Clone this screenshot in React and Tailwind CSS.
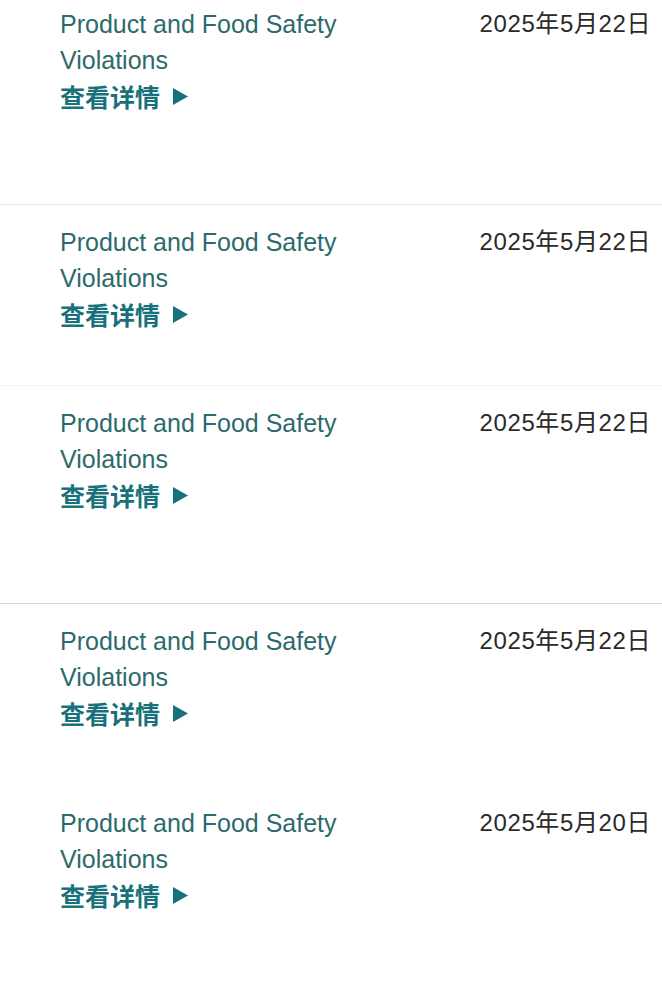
const rows = [
  { date: "2025年5月22日", h: "h-[205px]", pt: "pt-[6px]" },
  { date: "2025年5月22日", h: "h-[181px]", pt: "pt-[19px]" },
  { date: "2025年5月22日", h: "h-[218px]", pt: "pt-[19px]" },
  { date: "2025年5月22日", h: "h-[182px]", pt: "pt-[19px]" },
  { date: "2025年5月20日", h: "h-[196px]", pt: "pt-[19px]" },
];

const borders = ["border-[#ebebeb]", "border-[#f3f3f3]", "border-[#d9d9d9]", "border-transparent", "border-transparent"];

const App = () => {
  return (
    <div className="w-[662px] h-[982px] overflow-hidden bg-white font-['Liberation_Sans','Noto_Sans_CJK_SC',sans-serif]">
      {rows.map((row, i) => (
        <div key={i} className={`${row.h} ${row.pt} border-b ${borders[i]} flex justify-between`}>
          <div className="pl-[60px] w-[360px]">
            <p className="text-[25px] leading-[36px] text-[#2c6a6c]">
              Product and Food Safety Violations
            </p>
            <a className="flex items-center gap-[12px] text-[25px] leading-[36px] font-bold text-[#17717b] font-['Noto_Sans_CJK_SC',sans-serif]">
              查看详情
              <svg width="17" height="19" viewBox="0 0 17 19" className="fill-[#17717b]">
                <path d="M1 1 L16 9.5 L1 18 Z" />
              </svg>
            </a>
          </div>
          <div className="pr-[11px] text-[24px] leading-[36px] text-[#2a2a2a] tracking-[0.6px]">
            {row.date}
          </div>
        </div>
      ))}
    </div>
  );
};

export default App;
